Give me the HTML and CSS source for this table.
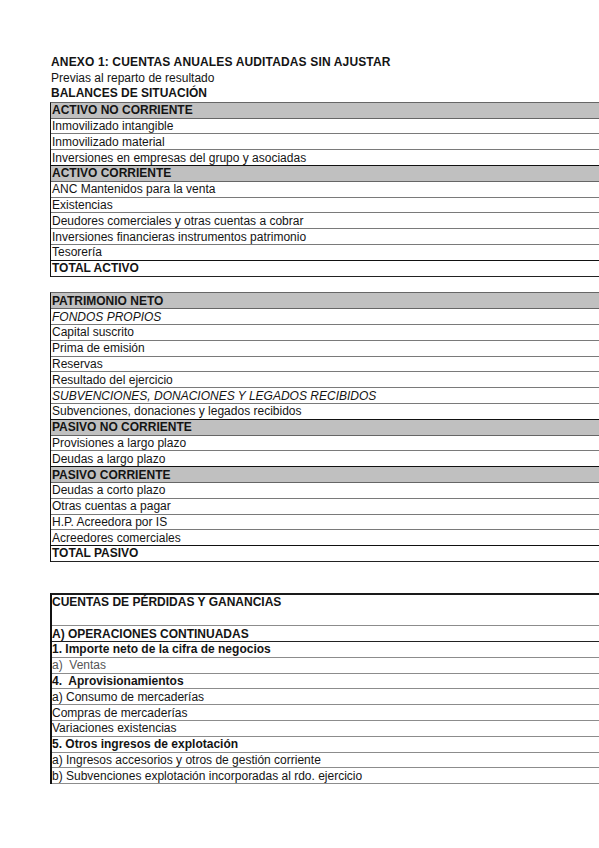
FILE: index.html
```html
<!DOCTYPE html>
<html lang="es">
<head>
<meta charset="utf-8">
<title>Anexo 1</title>
<link rel="stylesheet" href="styles.css">
</head>
<body>
<div class="page">
  <div class="heading">
    <div class="bold title">ANEXO 1: CUENTAS ANUALES AUDITADAS SIN AJUSTAR</div>
    <div>Previas al reparto de resultado</div>
    <div class="bold">BALANCES DE SITUACIÓN</div>
  </div>

  <div class="sheet">
    <div class="row hd">ACTIVO NO CORRIENTE</div>
    <div class="row">Inmovilizado intangible</div>
    <div class="row">Inmovilizado material</div>
    <div class="row dark">Inversiones en empresas del grupo y asociadas</div>
    <div class="row hd">ACTIVO CORRIENTE</div>
    <div class="row">ANC Mantenidos para la venta</div>
    <div class="row">Existencias</div>
    <div class="row">Deudores comerciales y otras cuentas a cobrar</div>
    <div class="row">Inversiones financieras instrumentos patrimonio</div>
    <div class="row dark">Tesorería</div>
    <div class="row total">TOTAL ACTIVO</div>
  </div>

  <div class="blank"></div>

  <div class="sheet">
    <div class="row hd">PATRIMONIO NETO</div>
    <div class="row it">FONDOS PROPIOS</div>
    <div class="row">Capital suscrito</div>
    <div class="row">Prima de emisión</div>
    <div class="row">Reservas</div>
    <div class="row">Resultado del ejercicio</div>
    <div class="row it">SUBVENCIONES, DONACIONES Y LEGADOS RECIBIDOS</div>
    <div class="row dark">Subvenciones, donaciones y legados recibidos</div>
    <div class="row hd">PASIVO NO CORRIENTE</div>
    <div class="row">Provisiones a largo plazo</div>
    <div class="row dark">Deudas a largo plazo</div>
    <div class="row hd">PASIVO CORRIENTE</div>
    <div class="row">Deudas a corto plazo</div>
    <div class="row">Otras cuentas a pagar</div>
    <div class="row">H.P. Acreedora por IS</div>
    <div class="row dark">Acreedores comerciales</div>
    <div class="row total">TOTAL PASIVO</div>
  </div>

  <div class="blank double"></div>

  <div class="sheet pyg">
    <div class="row tall bold">CUENTAS DE PÉRDIDAS Y GANANCIAS</div>
    <div class="row bold dark">A) OPERACIONES CONTINUADAS</div>
    <div class="row bold">1. Importe neto de la cifra de negocios</div>
    <div class="row soft">a)&nbsp; Ventas</div>
    <div class="row bold">4.&nbsp; Aprovisionamientos</div>
    <div class="row">a) Consumo de mercaderías</div>
    <div class="row">Compras de mercaderías</div>
    <div class="row">Variaciones existencias</div>
    <div class="row bold">5. Otros ingresos de explotación</div>
    <div class="row">a) Ingresos accesorios y otros de gestión corriente</div>
    <div class="row">b) Subvenciones explotación incorporadas al rdo. ejercicio</div>
  </div>
</div>
</body>
</html>
```

FILE: styles.css
```css
html, body {
  margin: 0;
  padding: 0;
  overflow: hidden;
  background: #ffffff;
}

body {
  font-family: "Liberation Sans", Arial, sans-serif;
  font-size: 12px;
  color: #141414;
}

.page {
  padding: 55px 0 0 50px;
}

.heading {
  line-height: 15.6px;
  padding-left: 1px;
}

.bold {
  font-weight: bold;
}

.title {
  letter-spacing: 0.15px;
}

.sheet {
  display: flex;
  flex-direction: column;
  box-sizing: border-box;
  width: 549px;
  border-left: 1px solid #111;
  border-top: 1px solid #666;
}

.row {
  box-sizing: border-box;
  height: 15.8px;
  display: flex;
  align-items: center;
  padding-left: 1px;
  border-bottom: 1px solid #7a7a7a;
  white-space: nowrap;
}

.row.dark {
  border-bottom-color: #111;
}

.hd {
  background: #c0c0c0;
  font-weight: bold;
  border-bottom-color: #666;
}

.it {
  font-style: italic;
}

.total {
  font-weight: bold;
  border-bottom-color: #222;
}

.blank {
  height: 15.8px;
}

.blank.double {
  height: 31px;
}

.pyg {
  border-left: 2px solid #111;
  border-top: 2px solid #1a1a1a;
}

.pyg .row {
  padding-left: 0;
  border-bottom-color: #8c8c8c;
}

.pyg .row.dark {
  border-bottom-color: #222;
}

.tall {
  height: 31.4px;
  align-items: flex-start;
  padding-top: 0;
}

.soft {
  color: #555;
}
```
